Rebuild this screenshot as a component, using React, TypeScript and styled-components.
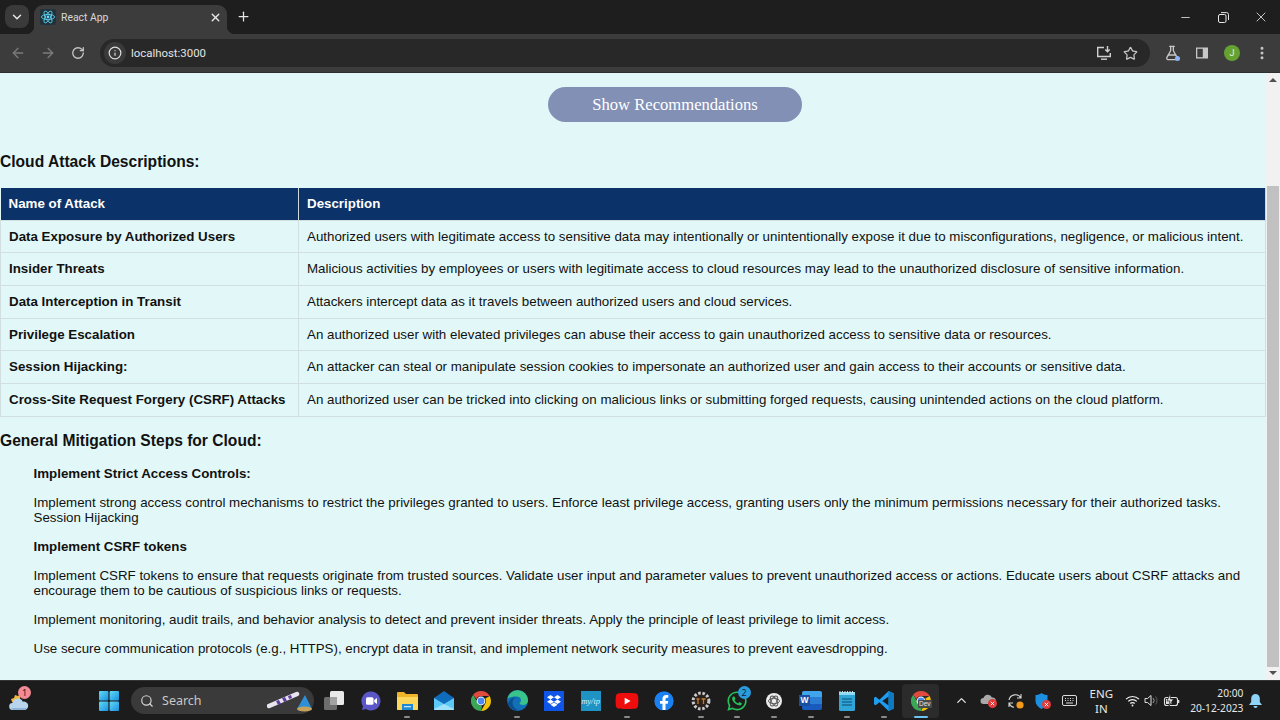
import React from 'react';
import styled, { createGlobalStyle } from 'styled-components';
import {
  ArrowLeft,
  ArrowRight,
  ChevronDown,
  ChevronUp,
  EllipsisVertical,
  FlaskConical,
  Info,
  Minus,
  Plus,
  RotateCw,
  Search,
  Star,
  X,
} from 'lucide-react';
import { FaDropbox, FaFacebook, FaWhatsapp, FaYoutube } from 'react-icons/fa';

const GlobalStyle = createGlobalStyle`
  html, body {
    margin: 0;
    padding: 0;
    height: 100%;
    overflow: hidden;
    background: #1c1c1c;
  }
  * { box-sizing: border-box; }
`;

const Screen = styled.div`
  width: 1280px;
  height: 720px;
  display: flex;
  flex-direction: column;
  overflow: hidden;
  font-family: 'Liberation Sans', Arial, sans-serif;
`;

/* browser chrome */
const TabStrip = styled.div`
  height: 34px;
  flex: none;
  display: flex;
  align-items: flex-end;
  background: #1e1e1e;
  color: #e6e6e6;
  padding-left: 5px;
`;

const TabSearch = styled.div`
  width: 24px;
  height: 23px;
  margin-bottom: 6px;
  border-radius: 8px;
  background: #3a3a3a;
  display: flex;
  align-items: center;
  justify-content: center;
`;

const Tab = styled.div`
  position: relative;
  width: 193px;
  height: 29px;
  margin-left: 5px;
  padding: 0 5px 5px 6px;
  border-radius: 9px 9px 0 0;
  background: #3c3c3c;
  display: flex;
  align-items: center;
  gap: 4px;
  &::before, &::after {
    content: '';
    position: absolute;
    bottom: 0;
    width: 8px;
    height: 8px;
  }
  &::before {
    left: -8px;
    background: radial-gradient(circle at 0 0, transparent 8px, #3c3c3c 8.5px);
  }
  &::after {
    right: -8px;
    background: radial-gradient(circle at 100% 0, transparent 8px, #3c3c3c 8.5px);
  }
`;

const TabTitle = styled.span`
  flex: 1;
  margin-left: 1px;
  font-family: Roboto, sans-serif;
  font-size: 10.4px;
  color: #d8d8d8;
`;

const NewTab = styled.div`
  margin-left: 9px;
  margin-bottom: 9px;
  height: 16px;
  display: flex;
`;

const WindowControls = styled.div`
  margin-left: auto;
  align-self: stretch;
  display: flex;
  align-items: center;
`;

const WindowButton = styled.div`
  width: 38px;
  height: 34px;
  display: flex;
  align-items: center;
  justify-content: center;
`;

const Toolbar = styled.div`
  height: 39px;
  flex: none;
  background: #3c3c3c;
  border-bottom: 1px solid #2e2e2e;
  display: flex;
  align-items: center;
  padding-left: 3px;
  color: #c7c7c7;
`;

const ToolButton = styled.div<{ $dim?: boolean }>`
  position: relative;
  width: 30px;
  height: 30px;
  flex: none;
  display: flex;
  align-items: center;
  justify-content: center;
  color: ${p => (p.$dim ? '#7b7b7b' : '#c7c7c7')};
`;

const OmniAction = styled.div`
  width: 27px;
  height: 28px;
  flex: none;
  display: flex;
  align-items: center;
  justify-content: center;
  color: #c7c7c7;
`;

const LabDot = styled.span`
  position: absolute;
  right: 7px;
  bottom: 7px;
  width: 5px;
  height: 5px;
  border-radius: 50%;
  background: #8ab4f8;
`;

const Omnibox = styled.div`
  width: 1050px;
  height: 28px;
  margin: 0 7px;
  border-radius: 14px;
  background: #282828;
  display: flex;
  align-items: center;
  padding: 0 6px 0 4px;
`;

const SiteInfo = styled.div`
  width: 22px;
  height: 22px;
  border-radius: 50%;
  background: #3a3a3a;
  display: flex;
  align-items: center;
  justify-content: center;
  color: #e2e2e2;
`;

const Url = styled.span`
  flex: 1;
  margin-left: 5px;
  font-family: Roboto, sans-serif;
  font-size: 11.4px;
  color: #e4e4e4;
`;

const Avatar = styled.div`
  width: 16px;
  height: 16px;
  border-radius: 50%;
  background: #66a231;
  color: #e8f3dc;
  font-family: Roboto, sans-serif;
  font-size: 9px;
  display: flex;
  align-items: center;
  justify-content: center;
`;

/* page */
const Viewport = styled.div`
  flex: 1;
  min-height: 0;
  display: flex;
  background: #e2f8f8;
`;

const Page = styled.main`
  flex: 1;
  min-width: 0;
  padding: 14px 0 0;
  overflow: hidden;
`;

const ButtonRow = styled.div`
  display: flex;
  justify-content: center;
  padding-left: 84px;
`;

const RecommendButton = styled.button`
  width: 254px;
  height: 35px;
  padding: 0;
  border: 0;
  border-radius: 18px;
  background: #8290b5;
  color: #fff;
  font-family: 'Liberation Serif', 'Times New Roman', serif;
  font-size: 16.6px;
`;

const SectionTitle = styled.h3<{ $top: number; $bottom: number }>`
  margin: ${p => p.$top}px 0 ${p => p.$bottom}px;
  font-size: 15.6px;
  line-height: 18px;
  font-weight: 700;
  color: #111;
`;

const AttackTable = styled.table`
  width: 100%;
  border-collapse: collapse;
  font-size: 13.33px;
  line-height: 15.67px;
  color: #111;
`;

const HeadCell = styled.th`
  padding: 8px;
  background: #0b3369;
  color: #fff;
  text-align: left;
  font-weight: 700;
  border: 1px solid #ccd8da;
  border-width: 0 1px 0 0;
`;

const NameCell = styled.td`
  width: 298px;
  padding: 8px;
  font-weight: 700;
  white-space: nowrap;
  border: 1px solid #d2dfe1;
`;

const DescCell = styled.td`
  padding: 8px;
  border: 1px solid #d2dfe1;
`;

const Steps = styled.div`
  padding: 0 20px 0 33.5px;
  font-size: 13.33px;
  line-height: 15px;
  color: #111;
`;

const StepTitle = styled.p`
  margin: 0 0 14px;
  font-weight: 700;
`;

const StepText = styled.p`
  margin: 0 0 14px;
`;

const Scrollbar = styled.div`
  width: 14px;
  flex: none;
  background: #f1f1f1;
  display: flex;
  flex-direction: column;
  align-items: center;
  padding: 5px 1px;
`;

const ScrollArrow = styled.div<{ $down?: boolean }>`
  width: 0;
  height: 0;
  flex: none;
  border-left: 4px solid transparent;
  border-right: 4px solid transparent;
  ${p => (p.$down ? 'border-top: 4px solid #505050;' : 'border-bottom: 4px solid #505050;')}
`;

const ScrollThumb = styled.div`
  width: 100%;
  height: 481px;
  flex: none;
  margin: 104px 0 4px;
  background: #c1c1c1;
`;

/* taskbar */
const Taskbar = styled.footer`
  height: 40px;
  flex: none;
  background: #1c1c1c;
  border-top: 1px solid #333;
  display: flex;
  align-items: center;
  color: #e8e8e8;
`;

const WeatherSlot = styled.div`
  position: relative;
  width: 38px;
  height: 38px;
  margin-right: 52.7px;
  display: flex;
  align-items: center;
  justify-content: center;
`;

const Badge = styled.span<{ $bg: string; $color: string; $right: number; $top: number }>`
  position: absolute;
  top: ${p => p.$top}px;
  right: ${p => p.$right}px;
  width: 13px;
  height: 13px;
  border-radius: 50%;
  background: ${p => p.$bg};
  color: ${p => p.$color};
  font-family: 'Noto Sans', sans-serif;
  font-size: 9px;
  line-height: 13px;
  text-align: center;
`;

const AppSlot = styled.div<{ $active?: boolean }>`
  position: relative;
  width: 36.67px;
  height: 34px;
  flex: none;
  display: flex;
  align-items: center;
  justify-content: center;
  border-radius: 4px;
  background: ${p => (p.$active ? '#2b2b2b' : 'transparent')};
`;

const RunDot = styled.span<{ $active?: boolean }>`
  position: absolute;
  bottom: 0;
  left: 50%;
  width: ${p => (p.$active ? '14px' : '6px')};
  height: 2px;
  margin-left: ${p => (p.$active ? '-7px' : '-3px')};
  border-radius: 1px;
  background: ${p => (p.$active ? '#6cc4f0' : '#8a8a8a')};
`;

const SearchPill = styled.div`
  position: relative;
  width: 183px;
  height: 27px;
  margin: 0 1.7px 0 3.7px;
  flex: none;
  border-radius: 14px;
  background: #3a3a3a;
  display: flex;
  align-items: center;
  gap: 8px;
  padding-left: 9px;
  color: #d6d6d6;
`;

const SearchLabel = styled.span`
  font-family: 'Noto Sans', sans-serif;
  font-size: 12.5px;
  color: #c8c8c8;
`;

const SearchArt = styled.svg`
  position: absolute;
  right: 1px;
  top: 1px;
`;

const TrayIcons = styled.div`
  margin-left: 9.5px;
  display: flex;
  align-items: center;
`;

const TraySlot = styled.div`
  width: 27px;
  height: 30px;
  display: flex;
  align-items: center;
  justify-content: center;
`;

const Language = styled.div`
  width: 32px;
  margin: 0 4px 0 2px;
  font-family: 'Noto Sans', sans-serif;
  font-size: 11.5px;
  line-height: 15px;
  text-align: center;
`;

const QuickSettings = styled.div`
  display: flex;
  align-items: center;
  gap: 4px;
  padding-left: 4px;
`;

const Clock = styled.div`
  width: 63px;
  font-family: 'Noto Sans', sans-serif;
  font-size: 10.2px;
  line-height: 15px;
  text-align: right;
`;

const BellSlot = styled.div`
  margin-left: 6px;
  display: flex;
`;

const ReactFavicon = () => (
  <svg width="16" height="16" viewBox="0 0 16 16" fill="none">
    <rect width="16" height="16" rx="2" fill="#20323a" />
    <g stroke="#61dafb" strokeWidth="0.8">
      <ellipse cx="8" cy="8" rx="6.6" ry="2.6" />
      <ellipse cx="8" cy="8" rx="6.6" ry="2.6" transform="rotate(60 8 8)" />
      <ellipse cx="8" cy="8" rx="6.6" ry="2.6" transform="rotate(120 8 8)" />
    </g>
    <circle cx="8" cy="8" r="1.4" fill="#61dafb" />
  </svg>
);

const RestoreIcon = () => (
  <svg width="11" height="11" viewBox="0 0 11 11" fill="none" stroke="#e8e8e8" strokeWidth="1">
    <rect x="0.5" y="2.5" width="7.5" height="8" rx="1.5" />
    <path d="M3 .6h5.5A2 2 0 0 1 10.5 2.6V8" />
  </svg>
);

const InstallIcon = () => (
  <svg width="16" height="16" viewBox="0 0 16 16" fill="none" stroke="#d0d0d0" strokeWidth="1.4">
    <path d="M8 2.5H1.7v9h12.6V8" />
    <path d="M5 14.2h6" />
    <path d="M11.5 1v5.5M9.3 4.6l2.2 2.2 2.2-2.2" />
  </svg>
);

const SidePanelIcon = () => (
  <svg width="14" height="14" viewBox="0 0 14 14">
    <rect x="1" y="1.5" width="12" height="11" fill="#c7c7c7" />
    <rect x="2.3" y="2.8" width="5.5" height="8.4" fill="#3c3c3c" />
  </svg>
);

const WeatherIcon = () => (
  <svg width="22" height="22" viewBox="0 0 22 22">
    <path d="M3 9l3-1 1-3 3 1 2-1v7H4z" fill="#f2b63c" />
    <path d="M5 20a3.5 3.5 0 0 1-.6-7 5.5 5.5 0 0 1 10.4-1.3A4.2 4.2 0 0 1 17 20z" fill="#b9d5ee" />
    <path d="M3 18h16l-2 2H5z" fill="#8db4d8" />
  </svg>
);

const StartIcon = () => (
  <svg width="20" height="20" viewBox="0 0 20 20">
    <defs>
      <linearGradient id="startTile" x1="0" y1="0" x2="1" y2="1">
        <stop offset="0" stopColor="#5fdcf5" />
        <stop offset="1" stopColor="#1c8fe0" />
      </linearGradient>
    </defs>
    <rect x="0" y="0" width="9.4" height="9.4" rx="1" fill="url(#startTile)" />
    <rect x="10.6" y="0" width="9.4" height="9.4" rx="1" fill="url(#startTile)" />
    <rect x="0" y="10.6" width="9.4" height="9.4" rx="1" fill="url(#startTile)" />
    <rect x="10.6" y="10.6" width="9.4" height="9.4" rx="1" fill="url(#startTile)" />
  </svg>
);

const TaskViewIcon = () => (
  <svg width="20" height="20" viewBox="0 0 20 20">
    <rect x="0" y="6" width="13" height="13" rx="1.5" fill="#6d6d6d" />
    <rect x="6" y="0" width="14" height="14" rx="1.5" fill="#e9e9e9" />
    <rect x="6" y="6" width="7" height="8" fill="#a2a2a2" />
  </svg>
);

const MeetIcon = () => (
  <svg width="20" height="20" viewBox="0 0 20 20">
    <path d="M10 .5a9.5 9.5 0 1 1-5 17.6L1 19l1-3.8A9.5 9.5 0 0 1 10 .5z" fill="#5c57c9" />
    <rect x="5" y="6.3" width="7.5" height="7.4" rx="1.5" fill="#fff" />
    <path d="M13.2 9l2.8-2v6l-2.8-2z" fill="#fff" />
  </svg>
);

const FolderIcon = () => (
  <svg width="21" height="20" viewBox="0 0 21 20">
    <path d="M0 2a1 1 0 0 1 1-1h6l2 2h11a1 1 0 0 1 1 1v14a1 1 0 0 1-1 1H1a1 1 0 0 1-1-1z" fill="#f0b429" />
    <path d="M0 6h21v12a1 1 0 0 1-1 1H1a1 1 0 0 1-1-1z" fill="#fbd75b" />
    <rect x="5" y="13" width="11" height="6" fill="#1e8ad6" />
    <rect x="7" y="15" width="7" height="1.3" fill="#bfe6fb" />
  </svg>
);

const MailIcon = () => (
  <svg width="20" height="19" viewBox="0 0 20 19">
    <path d="M0 7l10-7 10 7v11a1 1 0 0 1-1 1H1a1 1 0 0 1-1-1z" fill="#0f6cbd" />
    <path d="M0 7l10 6 10-6v11a1 1 0 0 1-1 1H1a1 1 0 0 1-1-1z" fill="#5cc8f5" />
    <path d="M0 18l10-5 10 5v.2a1 1 0 0 1-1 .8H1a1 1 0 0 1-1-1z" fill="#9fe0fb" />
  </svg>
);

const ChromeIcon = ({ size = 20 }: { size?: number }) => (
  <svg width={size} height={size} viewBox="0 0 20 20">
    <path d="M10 0a10 10 0 0 1 8.66 5H10a5 5 0 0 0-4.6 3L2.2 3.7A10 10 0 0 1 10 0z" fill="#e0493b" />
    <path d="M18.66 5A10 10 0 0 1 10 20l4.3-7.5A5 5 0 0 0 14.3 7.4z" fill="#f4c20d" />
    <path d="M2.2 3.7l4.3 7.5A5 5 0 0 0 11 15l-1 5A10 10 0 0 1 2.2 3.7z" fill="#3aa757" />
    <circle cx="10" cy="10" r="4.4" fill="#fff" />
    <circle cx="10" cy="10" r="3.4" fill="#4a89f3" />
  </svg>
);

const EdgeIcon = () => (
  <svg width="21" height="21" viewBox="0 0 21 21">
    <circle cx="10.5" cy="10.5" r="10.5" fill="#1170b8" />
    <path d="M.5 9A10.3 10.3 0 0 1 21 10.5c0 3-2.5 4.5-5 4.5-2 0-3.5-1-3.5-2 2-1 2.5-6-2.5-6.5C5.5 6.5 2 7 .5 9z" fill="#39c48a" />
    <path d="M10 7c-3 .5-4.5 3-4.5 6 0 3 2.5 6 6 7-6 1-10-3-10.5-7C2.5 9.5 6 7 10 7z" fill="#0c4f8f" />
  </svg>
);

const MytpBox = styled.div`
  width: 20px;
  height: 20px;
  background: #1f93c4;
  color: #d8f1fb;
  font-family: 'Liberation Serif', serif;
  font-style: italic;
  font-size: 8.5px;
  line-height: 20px;
  text-align: center;
`;

const DropboxBox = styled.div`
  width: 20px;
  height: 20px;
  background: #0f55e8;
  color: #fff;
  display: flex;
  align-items: center;
  justify-content: center;
`;

const FacebookGlyph = styled(FaFacebook)`
  color: #1b81f0;
  background: radial-gradient(circle, #fff 62%, transparent 64%);
  border-radius: 50%;
`;

const YoutubeGlyph = styled(FaYoutube)`
  color: #ee0d0d;
  background: linear-gradient(#fff, #fff) center / 8px 8px no-repeat;
`;

const GearIcon = () => (
  <svg width="20" height="20" viewBox="0 0 20 20">
    <circle cx="10" cy="10" r="7.4" fill="none" stroke="#c9c9c9" strokeWidth="4" strokeDasharray="2.4 1.6" />
    <circle cx="10" cy="10" r="6.4" fill="#2c211b" />
    <path d="M5.5 8h3M7 8v5M10.5 8h4M12.5 8v5" stroke="#c47c2a" strokeWidth="1.3" fill="none" />
  </svg>
);

const ChatIcon = () => (
  <svg width="16" height="16" viewBox="0 0 16 16">
    <circle cx="8" cy="8" r="8" fill="#ececec" />
    <g fill="none" stroke="#555" strokeWidth="0.9">
      <ellipse cx="8" cy="8" rx="5.5" ry="2.7" />
      <ellipse cx="8" cy="8" rx="5.5" ry="2.7" transform="rotate(60 8 8)" />
      <ellipse cx="8" cy="8" rx="5.5" ry="2.7" transform="rotate(120 8 8)" />
    </g>
  </svg>
);

const WordBox = styled.div`
  position: relative;
  width: 20px;
  height: 19px;
  background: linear-gradient(#41a5ee 0 33%, #2b7cd3 33% 66%, #185abd 66%);
  border-radius: 2px;
  margin-left: 3px;
`;

const WordBadge = styled.span`
  position: absolute;
  left: -3px;
  top: 4px;
  width: 11px;
  height: 11px;
  background: #1a4f9f;
  color: #fff;
  font-size: 8.5px;
  font-weight: 700;
  line-height: 11px;
  text-align: center;
`;

const NotepadIcon = () => (
  <svg width="16" height="20" viewBox="0 0 16 20">
    <rect x="0" y="1.5" width="16" height="18.5" rx="1.5" fill="#2fa5d8" />
    <rect x="0" y="1" width="16" height="3" fill="#8ed8f5" />
    <path d="M1 0v2M3.5 0v2M6 0v2M8.5 0v2M11 0v2M13.5 0v2" stroke="#d4eef9" strokeWidth="0.9" />
    <path d="M3 8h10M3 11h10M3 14h10" stroke="#0e4c73" strokeWidth="1.2" />
  </svg>
);

const VscodeIcon = () => (
  <svg width="20" height="20" viewBox="0 0 24 24">
    <path d="M17.5 0L24 3v18l-6.5 3-11-10.5L2 17l-2-1V8l2-1 4.5 3.5z" fill="#1f9cf0" />
    <path d="M17.5 6.5L10 12l7.5 5.5z" fill="#1c1c1c" />
    <path d="M17.5 0L24 3v18l-6.5 3z" fill="#0e7ac4" />
  </svg>
);

const DevChromeWrap = styled.div`
  position: relative;
  display: flex;
`;

const DevTag = styled.span`
  position: absolute;
  right: -1px;
  bottom: 3px;
  padding: 0 1px;
  background: #4a4a4a;
  color: #e6e6e6;
  font-size: 6.5px;
  line-height: 8px;
  border-radius: 1px;
`;

const SearchDecoration = () => (
  <SearchArt width="46" height="25" viewBox="0 0 46 25">
    <path d="M1 16L29 4a2 2 0 0 1 2 4L3 20a2 2 0 0 1-2-4z" fill="#e9e4ee" />
    <path d="M9 13l3-1 2 4-3 1zM15 10l3-1 2 4-3 1zM21 8l3-1 1 3-3 1z" fill="#5a3fa0" />
    <path d="M38 7l7 14a16 6 0 0 1-15 0z" fill="#2f8fd6" />
    <ellipse cx="37.5" cy="21" rx="7.5" ry="2.5" fill="#c7a25b" />
  </SearchArt>
);

const CloudOff = () => (
  <svg width="18" height="16" viewBox="0 0 18 16">
    <path d="M3.5 11a3 3 0 0 1 0-6 4.5 4.5 0 0 1 8.5-.5A3 3 0 0 1 13 11z" fill="#a9a9a9" />
    <circle cx="12.5" cy="10.5" r="4.5" fill="#e23b3b" />
    <path d="M10.8 8.8l3.4 3.4M14.2 8.8l-3.4 3.4" stroke="#fff" strokeWidth="1" />
  </svg>
);

const SyncIcon = () => (
  <svg width="18" height="18" viewBox="0 0 18 18" fill="none">
    <path d="M2 8a6.5 6.5 0 0 1 12-2M14 2v4h-4" stroke="#d8d8d8" strokeWidth="1.1" />
    <path d="M2 11c.8 2 2.5 4 5 4.3M2 15v-4h4" stroke="#d8d8d8" strokeWidth="1.1" />
    <circle cx="13" cy="13" r="3.6" fill="#f59a1b" />
  </svg>
);

const ShieldIcon = () => (
  <svg width="18" height="18" viewBox="0 0 18 18">
    <path d="M7.5 1c2 1.5 4 2 6 2v6c0 3.5-2.5 6-6 8-3.5-2-6-4.5-6-8V3c2 0 4-.5 6-2z" fill="#1d8fe0" />
    <circle cx="12.5" cy="12.5" r="4.5" fill="#e23b3b" />
    <path d="M10.8 10.8l3.4 3.4M14.2 10.8l-3.4 3.4" stroke="#fff" strokeWidth="1" />
  </svg>
);

const KeyboardIcon = () => (
  <svg width="15" height="11" viewBox="0 0 15 11" fill="none" stroke="#dcdcdc">
    <rect x="0.5" y="0.5" width="14" height="10" rx="1.5" />
    <path d="M3 3.5h1M5.5 3.5h1M8 3.5h1M10.5 3.5h1M3 5.5h1M5.5 5.5h1M8 5.5h1M10.5 5.5h1M4 8h7" />
  </svg>
);

const WifiIcon = () => (
  <svg width="15" height="12" viewBox="0 0 15 12" fill="none" stroke="#f0f0f0" strokeWidth="1.2">
    <path d="M1 4.2a9.2 9.2 0 0 1 13 0" />
    <path d="M3.2 6.4a6.1 6.1 0 0 1 8.6 0" />
    <path d="M5.3 8.5a3.1 3.1 0 0 1 4.4 0" />
    <circle cx="7.5" cy="10.5" r="0.9" fill="#f0f0f0" stroke="none" />
  </svg>
);

const VolumeIcon = () => (
  <svg width="15" height="13" viewBox="0 0 15 13" fill="none">
    <path d="M1 4.5h2.5L7 1.5v10L3.5 8.5H1z" stroke="#e0e0e0" strokeWidth="1" />
    <path d="M9 4a3.5 3.5 0 0 1 0 5" stroke="#b0b0b0" strokeWidth="0.9" />
    <path d="M11.5 2.5a6 6 0 0 1 0 8" stroke="#666" strokeWidth="0.9" />
  </svg>
);

const BatteryIcon = () => (
  <svg width="17" height="14" viewBox="0 0 17 14">
    <rect x="1.5" y="3.5" width="13" height="8" rx="2" fill="none" stroke="#e0e0e0" strokeWidth="1.1" />
    <rect x="3" y="5" width="5.5" height="5" fill="#e0e0e0" />
    <rect x="15" y="6" width="1.3" height="3" fill="#e0e0e0" />
    <path d="M7 0L4 7h3l-1.5 6 5-8H7.5z" fill="#e0e0e0" stroke="#1c1c1c" strokeWidth="0.7" />
  </svg>
);

const BellIcon = () => (
  <svg width="13" height="14" viewBox="0 0 13 14">
    <path d="M6.5 0A4.3 4.3 0 0 1 10.8 4.3V8L13 11H0l2.2-3V4.3A4.3 4.3 0 0 1 6.5 0z" fill="#8fd3f7" />
    <path d="M4.5 12h4a2 2 0 0 1-4 0z" fill="#8fd3f7" />
  </svg>
);

const ATTACKS = [
  ['Data Exposure by Authorized Users', 'Authorized users with legitimate access to sensitive data may intentionally or unintentionally expose it due to misconfigurations, negligence, or malicious intent.'],
  ['Insider Threats', 'Malicious activities by employees or users with legitimate access to cloud resources may lead to the unauthorized disclosure of sensitive information.'],
  ['Data Interception in Transit', 'Attackers intercept data as it travels between authorized users and cloud services.'],
  ['Privilege Escalation', 'An authorized user with elevated privileges can abuse their access to gain unauthorized access to sensitive data or resources.'],
  ['Session Hijacking:', 'An attacker can steal or manipulate session cookies to impersonate an authorized user and gain access to their accounts or sensitive data.'],
  ['Cross-Site Request Forgery (CSRF) Attacks', 'An authorized user can be tricked into clicking on malicious links or submitting forged requests, causing unintended actions on the cloud platform.'],
];

const App: React.FC = () => {
  return (
    <Screen>
      <GlobalStyle />
      <TabStrip>
        <TabSearch>
          <ChevronDown size={14} strokeWidth={2.5} />
        </TabSearch>
        <Tab>
          <ReactFavicon />
          <TabTitle>React App</TabTitle>
          <X size={13} strokeWidth={2.5} />
        </Tab>
        <NewTab>
          <Plus size={15} strokeWidth={2} />
        </NewTab>
        <WindowControls>
          <WindowButton><Minus size={13} strokeWidth={1.5} /></WindowButton>
          <WindowButton><RestoreIcon /></WindowButton>
          <WindowButton><X size={16} strokeWidth={1.25} /></WindowButton>
        </WindowControls>
      </TabStrip>
      <Toolbar>
        <ToolButton $dim><ArrowLeft size={16} /></ToolButton>
        <ToolButton $dim><ArrowRight size={16} /></ToolButton>
        <ToolButton><RotateCw size={14} strokeWidth={2.25} /></ToolButton>
        <Omnibox>
          <SiteInfo><Info size={14} strokeWidth={2} /></SiteInfo>
          <Url>localhost:3000</Url>
          <OmniAction><InstallIcon /></OmniAction>
          <OmniAction><Star size={15} strokeWidth={2} /></OmniAction>
        </Omnibox>
        <ToolButton><FlaskConical size={16} strokeWidth={2} /><LabDot /></ToolButton>
        <ToolButton><SidePanelIcon /></ToolButton>
        <ToolButton><Avatar>J</Avatar></ToolButton>
        <ToolButton><EllipsisVertical size={16} strokeWidth={2.5} /></ToolButton>
      </Toolbar>
      <Viewport>
        <Page>
          <ButtonRow>
            <RecommendButton>Show Recommendations</RecommendButton>
          </ButtonRow>
          <SectionTitle $top={31} $bottom={17}>Cloud Attack Descriptions:</SectionTitle>
          <AttackTable>
            <thead>
              <tr>
                <HeadCell>Name of Attack</HeadCell>
                <HeadCell>Description</HeadCell>
              </tr>
            </thead>
            <tbody>
              {ATTACKS.map(([name, desc]) => (
                <tr key={name}>
                  <NameCell>{name}</NameCell>
                  <DescCell>{desc}</DescCell>
                </tr>
              ))}
            </tbody>
          </AttackTable>
          <SectionTitle $top={15} $bottom={16}>General Mitigation Steps for Cloud:</SectionTitle>
          <Steps>
            <StepTitle>Implement Strict Access Controls:</StepTitle>
            <StepText>Implement strong access control mechanisms to restrict the privileges granted to users. Enforce least privilege access, granting users only the minimum permissions necessary for their authorized tasks. Session Hijacking</StepText>
            <StepTitle>Implement CSRF tokens</StepTitle>
            <StepText>Implement CSRF tokens to ensure that requests originate from trusted sources. Validate user input and parameter values to prevent unauthorized access or actions. Educate users about CSRF attacks and encourage them to be cautious of suspicious links or requests.</StepText>
            <StepText>Implement monitoring, audit trails, and behavior analysis to detect and prevent insider threats. Apply the principle of least privilege to limit access.</StepText>
            <StepText>Use secure communication protocols (e.g., HTTPS), encrypt data in transit, and implement network security measures to prevent eavesdropping.</StepText>
          </Steps>
        </Page>
        <Scrollbar>
          <ScrollArrow />
          <ScrollThumb />
          <ScrollArrow $down />
        </Scrollbar>
      </Viewport>
      <Taskbar>
        <WeatherSlot>
          <WeatherIcon />
          <Badge $bg="#f28b95" $color="#1c1c1c" $right={7} $top={4}>1</Badge>
        </WeatherSlot>
        <AppSlot><StartIcon /></AppSlot>
        <SearchPill>
          <Search size={14} />
          <SearchLabel>Search</SearchLabel>
          <SearchDecoration />
        </SearchPill>
        <AppSlot><TaskViewIcon /></AppSlot>
        <AppSlot><MeetIcon /></AppSlot>
        <AppSlot><FolderIcon /><RunDot /></AppSlot>
        <AppSlot><MailIcon /></AppSlot>
        <AppSlot><ChromeIcon /></AppSlot>
        <AppSlot><EdgeIcon /><RunDot /></AppSlot>
        <AppSlot><DropboxBox><FaDropbox size={14} /></DropboxBox></AppSlot>
        <AppSlot><MytpBox>my/tp</MytpBox></AppSlot>
        <AppSlot><YoutubeGlyph size={24} /><RunDot /></AppSlot>
        <AppSlot><FacebookGlyph size={20} /></AppSlot>
        <AppSlot><GearIcon /><RunDot /></AppSlot>
        <AppSlot>
          <FaWhatsapp size={22} color="#25c25a" />
          <Badge $bg="#2a9bdc" $color="#10263a" $right={5} $top={2}>2</Badge>
          <RunDot />
        </AppSlot>
        <AppSlot><ChatIcon /><RunDot /></AppSlot>
        <AppSlot><WordBox><WordBadge>W</WordBadge></WordBox><RunDot /></AppSlot>
        <AppSlot><NotepadIcon /><RunDot /></AppSlot>
        <AppSlot><VscodeIcon /><RunDot /></AppSlot>
        <AppSlot $active>
          <DevChromeWrap><ChromeIcon /><DevTag>Dev</DevTag></DevChromeWrap>
          <RunDot $active />
        </AppSlot>
        <TrayIcons>
          <TraySlot><ChevronUp size={15} strokeWidth={2} /></TraySlot>
          <TraySlot><CloudOff /></TraySlot>
          <TraySlot><SyncIcon /></TraySlot>
          <TraySlot><ShieldIcon /></TraySlot>
          <TraySlot><KeyboardIcon /></TraySlot>
        </TrayIcons>
        <Language>ENG<br />IN</Language>
        <QuickSettings>
          <WifiIcon />
          <VolumeIcon />
          <BatteryIcon />
        </QuickSettings>
        <Clock>20:00<br />20-12-2023</Clock>
        <BellSlot><BellIcon /></BellSlot>
      </Taskbar>
    </Screen>
  );
};

export default App;
